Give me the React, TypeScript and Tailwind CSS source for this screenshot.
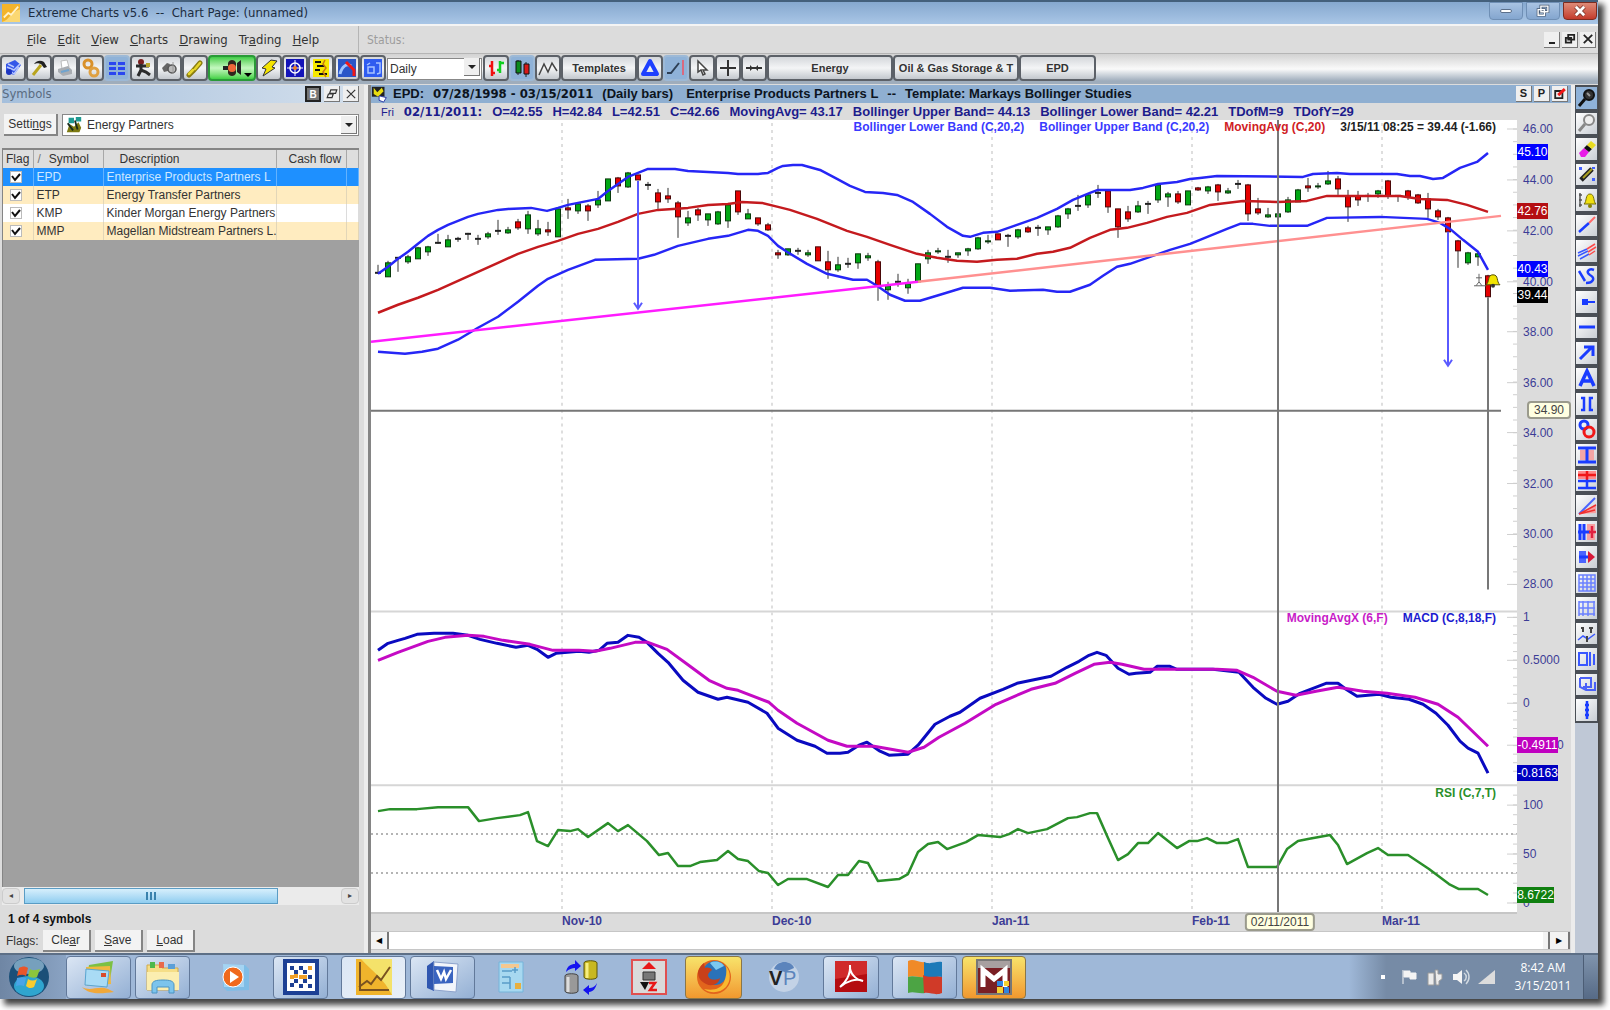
import { useState } from 'react'
import type { ReactNode } from 'react'
import clsx from 'clsx'

// price pane, x in plot units: bar k sits at 378 + 10k
// [body top, body bottom, high, low, g = up / r = down / k = unchanged]
type Candle = [number, number, number, number, 'g' | 'r' | 'k']

const candles: Candle[] = [
  [272, 273, 264, 273, 'k'], [262, 276, 260, 276, 'g'], [257, 258, 257, 271, 'k'], [256, 261, 254, 263, 'g'],
  [247, 258, 246, 258, 'g'], [246, 251, 245, 255, 'g'], [242, 243, 233, 243, 'k'], [239, 246, 234, 246, 'g'],
  [238, 239, 236, 241, 'k'], [233, 234, 232, 239, 'k'], [238, 239, 234, 244, 'k'], [233, 236, 231, 238, 'g'],
  [230, 231, 219, 234, 'k'], [229, 232, 226, 233, 'g'], [221, 227, 218, 229, 'r'], [214, 228, 210, 233, 'g'],
  [228, 233, 219, 235, 'g'], [229, 231, 221, 235, 'r'], [208, 236, 208, 236, 'g'], [207, 209, 198, 218, 'r'],
  [203, 210, 202, 213, 'g'], [205, 210, 203, 220, 'r'], [199, 204, 190, 207, 'g'], [178, 200, 178, 200, 'g'],
  [177, 185, 176, 192, 'r'], [172, 186, 171, 187, 'g'], [174, 179, 174, 179, 'r'], [184, 185, 181, 189, 'k'],
  [192, 201, 188, 208, 'r'], [195, 198, 187, 202, 'r'], [202, 216, 200, 237, 'r'], [217, 222, 210, 225, 'g'],
  [209, 214, 207, 220, 'r'], [213, 219, 213, 225, 'g'], [211, 223, 210, 224, 'g'], [204, 220, 202, 227, 'g'],
  [190, 211, 190, 214, 'r'], [213, 218, 208, 218, 'g'], [217, 223, 217, 225, 'r'], [224, 229, 222, 230, 'r'],
  [252, 254, 249, 258, 'r'], [248, 254, 248, 255, 'g'], [250, 251, 247, 254, 'k'], [252, 254, 249, 256, 'g'],
  [246, 260, 246, 260, 'r'], [261, 269, 250, 278, 'r'], [264, 269, 256, 271, 'g'], [263, 264, 257, 267, 'k'],
  [253, 262, 253, 268, 'g'], [255, 257, 252, 260, 'g'], [261, 285, 259, 300, 'r'], [285, 289, 281, 299, 'g'],
  [281, 283, 273, 286, 'k'], [283, 287, 278, 293, 'g'], [263, 281, 263, 282, 'g'], [252, 258, 249, 263, 'g'],
  [250, 251, 247, 253, 'g'], [256, 257, 249, 262, 'k'], [252, 254, 252, 257, 'g'], [248, 250, 247, 255, 'g'],
  [237, 248, 236, 249, 'g'], [240, 241, 234, 243, 'g'], [233, 239, 233, 239, 'r'], [235, 236, 233, 246, 'k'],
  [229, 236, 228, 238, 'g'], [227, 231, 225, 232, 'r'], [227, 228, 224, 235, 'k'], [226, 229, 226, 234, 'g'],
  [215, 226, 214, 227, 'g'], [208, 213, 207, 218, 'g'], [205, 206, 194, 210, 'k'], [194, 204, 193, 207, 'g'],
  [192, 193, 184, 197, 'k'], [190, 206, 190, 212, 'r'], [208, 226, 208, 237, 'r'], [211, 218, 205, 221, 'r'],
  [205, 211, 200, 212, 'g'], [203, 204, 200, 213, 'k'], [184, 199, 184, 202, 'g'], [193, 196, 191, 206, 'g'],
  [193, 201, 190, 203, 'r'], [190, 204, 190, 204, 'g'], [187, 189, 186, 190, 'r'], [186, 190, 185, 193, 'g'],
  [184, 191, 183, 200, 'r'], [190, 192, 187, 193, 'g'], [183, 184, 179, 188, 'k'], [184, 213, 183, 220, 'r'],
  [208, 212, 197, 214, 'r'], [214, 216, 207, 217, 'g'], [213, 216, 207, 217, 'g'], [199, 211, 196, 212, 'g'],
  [189, 201, 188, 201, 'g'], [185, 187, 177, 191, 'r'], [185, 186, 182, 188, 'g'], [180, 183, 170, 184, 'g'],
  [178, 188, 175, 194, 'r'], [195, 206, 189, 221, 'r'], [195, 199, 190, 205, 'r'], [195, 196, 192, 201, 'k'],
  [190, 193, 189, 197, 'g'], [180, 195, 179, 198, 'r'], [195, 196, 195, 201, 'k'], [190, 196, 189, 199, 'r'],
  [194, 202, 193, 203, 'r'], [198, 208, 192, 217, 'r'], [210, 216, 208, 219, 'r'], [217, 231, 216, 232, 'r'],
  [240, 250, 239, 267, 'r'], [252, 262, 251, 264, 'g'], [253, 256, 251, 265, 'g'], [275, 296, 274, 297, 'r'],
]

const upperBand =
  '378,273 388,266 398,258 408,251 418,243 428,235 438,229 448,224 458,220 468,216 478,213 488,211 498,209 508,208 531,207 547,210 558,207 568,204 578,202 588,200 598,198 608,190 618,183 628,176 638,172 648,168 675,168 688,170 728,172 738,173 758,173 768,172 778,167 783,165 793,164 802,164 820,169 837,178 850,185 865,191 883,192 897,194 913,201 930,213 947,226 963,235 970,236 983,232 997,231 1017,224 1037,217 1057,208 1073,199 1090,192 1098,189 1130,189 1143,187 1158,183 1177,181 1190,178 1200,177 1217,175 1303,176 1313,173 1337,172 1350,173 1397,173 1410,175 1420,175 1433,178 1443,177 1460,167 1477,161 1488,152'
const movingAvg =
  '378,312 398,304 418,297 438,289 458,280 478,271 498,262 518,253 538,246 558,240 578,233 598,228 618,221 638,213 658,209 688,207 708,204 728,203 742,201 762,202 778,206 790,209 817,218 847,230 867,236 890,244 917,253 937,257 957,260 977,261 997,259 1017,258 1037,253 1053,251 1070,247 1090,237 1110,229 1127,227 1147,222 1167,216 1187,212 1210,204 1243,200 1277,201 1307,200 1327,195 1400,195 1420,198 1447,199 1467,204 1488,211'
const lowerBand =
  '378,351 405,353 422,351 438,348 458,339 478,327 498,316 518,301 538,285 548,278 568,269 595,259 638,258 654,254 678,245 708,238 728,235 748,229 758,230 768,235 778,245 787,251 807,263 827,273 853,279 867,279 877,285 890,294 905,300 920,300 940,294 963,287 990,287 1010,290 1043,289 1057,291 1070,291 1090,284 1103,275 1117,266 1130,263 1150,256 1170,249 1190,243 1200,239 1227,228 1240,223 1253,223 1270,225 1307,225 1327,217 1380,216 1427,218 1440,222 1450,228 1463,239 1478,251 1488,269'
const macd =
  '378,650 388,643 398,640 405,638 417,634 434,633 453,633 468,635 480,639 497,643 516,647 528,645 537,649 548,657 556,653 579,651 589,652 599,650 607,643 618,642 628,635 639,637 647,642 658,653 668,662 683,680 698,692 718,699 727,697 748,702 767,713 778,728 797,740 815,746 827,753 840,753 848,752 859,745 867,742 880,751 889,755 908,754 918,745 935,724 950,716 960,712 980,698 1003,689 1017,683 1051,676 1067,667 1079,661 1089,655 1097,652 1106,655 1118,668 1129,674 1136,673 1150,672 1157,666 1170,666 1177,669 1213,669 1239,672 1253,687 1266,698 1277,704 1288,701 1300,693 1326,683 1338,683 1346,689 1357,696 1379,694 1391,697 1409,699 1423,704 1436,713 1448,725 1460,741 1468,748 1478,753 1488,773'
const macdSignal =
  '378,660 398,652 428,641 445,637 468,635 484,636 503,640 530,644 553,650 579,650 595,651 610,648 635,642 648,642 667,649 690,666 709,680 727,688 738,690 769,702 778,710 797,723 828,740 847,746 874,746 908,752 924,747 939,737 965,723 996,704 1031,689 1055,683 1075,673 1094,664 1110,662 1122,664 1144,669 1217,669 1237,670 1253,677 1277,691 1296,695 1316,691 1338,687 1363,691 1387,693 1415,697 1438,704 1458,717 1488,746'
const rsi =
  '378,811 390,809 417,809 438,807 468,807 479,821 497,818 520,815 528,812 537,841 548,846 558,830 570,831 578,829 588,837 608,823 618,831 628,825 647,841 659,855 668,853 678,866 690,866 700,862 717,860 728,851 738,859 748,861 759,871 768,873 778,885 788,879 807,879 828,887 838,875 848,875 859,861 868,863 878,881 899,879 908,874 918,852 928,844 938,842 947,849 966,842 978,835 1000,837 1009,834 1018,829 1028,833 1047,829 1068,818 1077,817 1090,813 1097,813 1108,838 1118,860 1128,854 1138,843 1148,843 1158,833 1177,848 1189,841 1197,841 1207,838 1217,843 1227,843 1238,839 1248,867 1277,867 1287,849 1298,841 1308,839 1330,835 1338,845 1347,864 1367,853 1378,848 1388,855 1408,855 1429,869 1449,884 1459,889 1478,889 1488,895'

const PLOT = { left: 371, top: 119, width: 1146, height: 793 }

const months = [
  { x: 562, label: 'Nov-10' },
  { x: 772, label: 'Dec-10' },
  { x: 992, label: 'Jan-11' },
  { x: 1192, label: 'Feb-11' },
  { x: 1382, label: 'Mar-11' },
]

const scale = [
  { y: 128, label: '46.00' },
  { y: 179, label: '44.00' },
  { y: 230, label: '42.00' },
  { y: 281, label: '40.00' },
  { y: 331, label: '38.00' },
  { y: 382, label: '36.00' },
  { y: 432, label: '34.00' },
  { y: 483, label: '32.00' },
  { y: 534, label: '30.00' },
  { y: 584, label: '28.00' },
  { y: 617, label: '1' },
  { y: 660, label: '0.5000' },
  { y: 703, label: '0' },
  { y: 745, label: '-0.5000' },
  { y: 805, label: '100' },
  { y: 854, label: '50' },
  { y: 903, label: '0' },
]

const tags = [
  { y: 151, label: '45.10', cls: 'bg-[#0000ff] w-[31px]' },
  { y: 210, label: '42.76', cls: 'bg-[#b40e12] w-[31px]' },
  { y: 268, label: '40.43', cls: 'bg-[#0000ff] w-[31px]' },
  { y: 294, label: '39.44', cls: 'bg-black w-[31px]' },
  { y: 745, label: '-0.4911', cls: 'bg-[#c000c0] w-[41px]' },
  { y: 773, label: '-0.8163', cls: 'bg-[#0000c0] w-[41px]' },
  { y: 895, label: '8.6722', cls: 'bg-[#108010] w-[37px]' },
]

const minorTicks = [
  ...Array.from({ length: 37 }, (_, i) => 128 + i * 12.67),
  ...Array.from({ length: 19 }, (_, i) => 617 + i * 8.56),
  ...Array.from({ length: 12 }, (_, i) => 795 + i * 9.8),
]

const symbols = [
  { id: 'EPD', name: 'Enterprise Products Partners L' },
  { id: 'ETP', name: 'Energy Transfer Partners' },
  { id: 'KMP', name: 'Kinder Morgan Energy Partners' },
  { id: 'MMP', name: 'Magellan Midstream Partners L.' },
]

const readings = [
  'O=42.55', 'H=42.84', 'L=42.51', 'C=42.66', 'MovingAvg= 43.17',
  'Bollinger Upper Band= 44.13', 'Bollinger Lower Band= 42.21', 'TDofM=9', 'TDofY=29',
]

function pctY(y: number) {
  return `${((y - PLOT.top) / PLOT.height) * 100}%`
}

function pctX(x: number) {
  return `${((x - PLOT.left) / PLOT.width) * 100}%`
}

function Svg({ children, size = 'size-5', box = '0 0 20 20' }: { children: ReactNode; size?: string; box?: string }) {
  return (
    <svg viewBox={box} className={clsx('shrink-0', size)} fill="none" aria-hidden="true">
      {children}
    </svg>
  )
}

const leftTools: { name: string; pressed?: boolean; icon: ReactNode }[] = [
  {
    name: 'Pages',
    icon: <><path d="M3 6l9-4 6 5-7 10-8-3z" fill="#3557e8" /><path d="M4 9l7 3 6-6M6 12l5 4 5-7M5 6l6 3" stroke="#b9c8ff" strokeWidth="1.5" /><circle cx="6" cy="14" r="3" fill="#1d35c0" /></>,
  },
  { name: 'Build', icon: <><path d="M4 17L12 7" stroke="#b9a51f" strokeWidth="3" /><path d="M5 6c3-4 7-4 10-2l3 5-3 1-3-4c-3-1-4-1-7 0z" fill="#222" /></> },
  { name: 'Print', icon: <><path d="M6 3l6-1 2 7-7 2z" fill="#fff" stroke="#bbb" /><path d="M3 11l10-3 4 4v4l-9 2-5-4z" fill="#a9adb2" /><path d="M6 14l8-2" stroke="#6fa4cf" strokeWidth="2" /></> },
  { name: 'Preferences', icon: <><circle cx="7" cy="6" r="4" stroke="#d9912a" strokeWidth="3" /><circle cx="13" cy="14" r="4" stroke="#e0a040" strokeWidth="3" /></> },
  { name: 'Symbol list', pressed: true, icon: <path d="M2 4h7v3H2zM11 4h7v3h-7zM2 9h7v3H2zM11 9h7v3h-7zM2 14h7v3H2zM11 14h7v3h-7z" fill="#2a46f0" /> },
  { name: 'Scanner', icon: <><circle cx="8" cy="4" r="3" fill="#7a1f1f" /><path d="M3 8h13M8 6v6M5 18l3-6 5 2 4 3" stroke="#2b2b2b" strokeWidth="3" /><path d="M13 5h4v4h-4z" fill="#b7a52a" /></> },
  { name: 'Sound', icon: <><path d="M3 10l5-5 3 1-2 7-4 1z" fill="#666" /><circle cx="13" cy="11" r="4" fill="#bbb" stroke="#555" strokeWidth="1.5" /><path d="M14 4v12" stroke="#999" /></> },
  { name: 'Link', icon: <><path d="M4 17l5-5M8 13l7-8" stroke="#8a7d10" strokeWidth="5" strokeLinecap="round" /><path d="M4 16l4-4M10 11l5-6" stroke="#e6d52c" strokeWidth="2.5" strokeLinecap="round" /></> },
]

const midTools: { name: string; icon: ReactNode }[] = [
  { name: 'Quick quote', icon: <path d="M12 2l6 1-5 6 3 1L4 18l3-7-4-1z" fill="#f5e400" stroke="#333" /> },
  { name: 'Target', icon: <><path d="M1 1h18v18H1z" fill="#1414b8" /><circle cx="10" cy="10" r="5" stroke="#fff" strokeWidth="1.5" /><path d="M10 2v16M2 10h16" stroke="#fff" /><circle cx="10" cy="10" r="2" fill="#f08020" /></> },
  { name: 'Heat map', icon: <><path d="M2 1h16v18H2z" fill="#f6e800" /><path d="M4 4h6M6 8h8M4 12h5M8 16h8" stroke="#111" strokeWidth="2" /><path d="M14 2l-2 4 3 4-3 4 3 5" stroke="#c87a10" strokeWidth="1.5" /></> },
  { name: 'Gauge', icon: <><path d="M1 1h18v18H1z" fill="#2a55c8" /><path d="M3 16c2-8 7-11 11-8" stroke="#9fc3ff" strokeWidth="3" /><path d="M9 4l8 8v6" stroke="#f01818" strokeWidth="3" /></> },
  { name: 'Replay', icon: <><path d="M1 1h18v18H1z" fill="#2f5cf0" /><path d="M4 7l3-2M13 5h4v10l-3 1M5 9h6v6H5z" stroke="#a9c4ff" strokeWidth="1.5" /></> },
]

const drawTools: { name: string; icon: ReactNode; pressed?: boolean }[] = [
  { name: 'Zoom in', pressed: true, icon: <><circle cx="12" cy="7" r="5" fill="#333" stroke="#111" strokeWidth="2" /><path d="M8 11l-6 7" stroke="#111" strokeWidth="3" /><path d="M10 5l3 3" stroke="#999" strokeWidth="2" /></> },
  { name: 'Zoom out', icon: <><circle cx="12" cy="7" r="5" fill="#eee" stroke="#888" strokeWidth="2" /><path d="M8 11l-6 7" stroke="#888" strokeWidth="3" /></> },
  { name: 'Eraser', icon: <><path d="M2 14l5-5 5 4-4 5H4z" fill="#e81ce8" /><path d="M7 9l3-3 5 4-3 3z" fill="#111" /><path d="M10 6l4-4 5 4-4 4z" fill="#e8dc20" /></> },
  { name: 'Pencil', icon: <><path d="M2 3h3v3H2zM15 14h3v3h-3zM15 3h3v2h-3zM9 8h3v2z" fill="#4060ff" /><path d="M4 16l11-11" stroke="#222" strokeWidth="5" /><path d="M6 14l9-9" stroke="#a99f20" strokeWidth="2" /></> },
  { name: 'Alert', icon: <><path d="M3 3v14M2 5h3M2 10h3M2 15h3" stroke="#555" strokeWidth="1.5" /><path d="M7 14c3-2 1-10 6-10s3 8 6 10z" fill="#f0e010" stroke="#77700a" /><circle cx="13" cy="16" r="2" fill="#888200" /></> },
  { name: 'Trend line', icon: <><path d="M2 17L12 8" stroke="#1a3cff" strokeWidth="2.5" /><path d="M12 8l6-6" stroke="#ff6b6b" strokeWidth="2" /></> },
  { name: 'Channel', icon: <><path d="M1 12l9-4M1 15l10-5M3 18l9-5" stroke="#3a58ff" strokeWidth="1.5" /><path d="M10 8l8-5M11 11l8-5M12 14l6-4" stroke="#ff4a4a" strokeWidth="1.5" /></> },
  { name: 'Curve', icon: <path d="M2 5l6 10M17 4c-5-2-9 2-4 5 6 3 3 8-4 8" stroke="#1a3cff" strokeWidth="2.5" /> },
  { name: 'Ray', icon: <path d="M6 8h4v4H6zM10 10h8" stroke="#1a3cff" strokeWidth="2" fill="#1a3cff" /> },
  { name: 'Horizontal line', icon: <path d="M2 10h16" stroke="#1a3cff" strokeWidth="3" /> },
  { name: 'Arrow', icon: <path d="M3 16L15 4M7 4h9v9" stroke="#1a3cff" strokeWidth="3" /> },
  { name: 'Text', icon: <path d="M3 18L10 3l7 15M5 13h10" stroke="#1a3cff" strokeWidth="3.5" /> },
  { name: 'Cycle', icon: <path d="M4 4h3v12H4M16 4h-3v12h3" stroke="#1a3cff" strokeWidth="2.5" /> },
  { name: 'Shapes', icon: <><circle cx="7" cy="6" r="4" stroke="#1a3cff" strokeWidth="3" /><circle cx="12" cy="13" r="5" stroke="#f01818" strokeWidth="3" /></> },
  { name: 'Range', icon: <><path d="M3 5h14v10H3z" fill="#f4a5a5" /><path d="M1 3h18M1 17h18M10 3v14" stroke="#1a3cff" strokeWidth="3" /></> },
  { name: 'Extension', icon: <><path d="M1 1h18v8H1z" fill="#ff8a8a" /><path d="M1 5h18M10 1v9" stroke="#f01818" strokeWidth="2.5" /><path d="M1 11h18M1 18h18M10 11v7" stroke="#1a3cff" strokeWidth="2.5" /></> },
  { name: 'Speed lines', icon: <><path d="M2 18L18 2" stroke="#4a64ff" strokeWidth="2" /><path d="M2 18L19 8v9z" fill="#f7a0a0" /><path d="M2 18L19 9M2 18l16-4" stroke="#f03030" strokeWidth="1.5" /></> },
  { name: 'Time zones', icon: <><path d="M10 2h8v16h-8z" fill="#f7a0a0" /><path d="M3 2v16M7 2v16M1 10h12" stroke="#1a3cff" strokeWidth="3" /><path d="M12 10h7M15 4v12" stroke="#e02040" strokeWidth="2.5" /></> },
  { name: 'Projection', icon: <><path d="M2 4h7v12H2z" fill="#4a64ff" /><path d="M2 10h11" stroke="#1a3cff" strokeWidth="3" /><path d="M11 4l7 6-7 6z" fill="#d81838" /></> },
  { name: 'Grid', icon: <path d="M2 2h16v16H2zM6 2v16M10 2v16M14 2v16M2 6h16M2 10h16M2 14h16" stroke="#6a80ff" strokeWidth="1.5" /> },
  { name: 'Bars', icon: <path d="M2 3v15M6 3v15M11 3v15M17 3v15M2 4h16M2 10h16M2 16h16" stroke="#6a80ff" strokeWidth="1.5" /> },
  { name: 'Waves', icon: <><path d="M1 16l5-4 5 3 7-5" stroke="#3a58ff" strokeWidth="1.5" /><path d="M6 3v5M4 4h3M14 3v6M12 4h4M10 12v6" stroke="#444" strokeWidth="2" /></> },
  { name: 'Box', icon: <path d="M2 4h8v12H2zM13 3v14M17 5v11" stroke="#3a58ff" strokeWidth="2" /> },
  { name: 'Spiral', icon: <path d="M3 3h11v9H6M3 3v9l6 3h9V7M9 8v6" stroke="#4a60f8" strokeWidth="2" /> },
  { name: 'Vertical line', icon: <path d="M10 1v18M8 5h4M8 10h4M8 15h4" stroke="#1a3cff" strokeWidth="2.5" /> },
]

const toolSkins = {
  plain: 'border-[#5c6168] bg-linear-to-b from-[#d4d7db] via-[#f4f5f6] to-[#c3c8ce]',
  pressed: 'border-[#9db9d6] bg-[#8fb2d8]',
  live: 'border-[#2a9a38] bg-linear-to-b from-[#3ccc44] via-[#c4f8c0] to-[#3fd144]',
}

function ToolButton({ name, skin = 'plain', className, children }: { name: string; skin?: keyof typeof toolSkins; className?: string; children: ReactNode }) {
  return (
    <button
      aria-label={name}
      className={clsx('flex h-[26px] items-center justify-center rounded border-2 text-[11px] font-bold text-[#333]', toolSkins[skin], className)}
    >
      {children}
    </button>
  )
}

function MiniButton({ name, children }: { name: string; children: ReactNode }) {
  return (
    <button aria-label={name} className="flex size-4 items-center justify-center border-r border-b border-[#777] bg-[#efefef] text-[11px] font-bold leading-none text-[#222]">
      {children}
    </button>
  )
}

function MenuItem({ label, hot = 0 }: { label: string; hot?: number }) {
  return (
    <button>
      {label.slice(0, hot)}
      <span className="underline">{label[hot]}</span>
      {label.slice(hot + 1)}
    </button>
  )
}

function PushButton({ children, className }: { children: ReactNode; className?: string }) {
  return (
    <button className={clsx('h-[22px] border-r-2 border-b-2 border-[#858585] bg-[#f3f3f3] text-[12px] text-[#333]', className)}>
      {children}
    </button>
  )
}

function TitleBar() {
  return (
    <header className="flex h-6 items-center border-t-2 border-[#44607c] bg-linear-to-b from-[#86a8cf] to-[#a9c6e6] pl-[2px] text-[13px] text-[#1c2c40]">
      <Svg size="size-[18px]">
        <path d="M0 0h20v20H0z" fill="#f3b42a" />
        <path d="M0 20C8 18 10 8 20 6v14z" fill="#fbd873" />
        <path d="M2 15l5-5 3 2 8-9" stroke="#fff2c8" strokeWidth="2" />
      </Svg>
      <h1 className="ml-2 grow whitespace-pre font-['DejaVu_Sans_Condensed','Noto_Sans',sans-serif]">Extreme Charts v5.6  --  Chart Page: (unnamed)</h1>
      <div className="flex gap-[3px] self-start pr-px">
        <button aria-label="Minimize" className="flex h-[18px] w-[34px] items-center justify-center rounded-b border border-[#6f8fb5] bg-linear-to-b from-[#a9c3e2] to-[#84a6cf]">
          <span className="h-1 w-3 rounded-sm border border-[#5b6f8a] bg-white" />
        </button>
        <button aria-label="Restore" className="flex h-[18px] w-[34px] items-center justify-center rounded-b border border-[#6f8fb5] bg-linear-to-b from-[#a9c3e2] to-[#84a6cf]">
          <Svg size="size-[14px]">
            <path d="M7 3h10v8H7zM3 8h9v8H3z" fill="#a9c3e2" stroke="#44566e" strokeWidth="4" />
            <path d="M7 3h10v8H7zM3 8h9v8H3z" stroke="#fff" strokeWidth="2" />
          </Svg>
        </button>
        <button aria-label="Close" className="flex h-[18px] w-[34px] items-center justify-center rounded-b border border-[#7c2c20] bg-linear-to-b from-[#dd8a78] to-[#c3392a]">
          <Svg size="size-[14px]">
            <path d="M4 4l12 12M16 4L4 16" stroke="#6a2a20" strokeWidth="6" />
            <path d="M4 4l12 12M16 4L4 16" stroke="#fff" strokeWidth="4" />
          </Svg>
        </button>
      </div>
    </header>
  )
}

function MenuBar() {
  return (
    <nav className="flex h-[29px] items-center border-t-2 border-[#f4f4f4] bg-[#dcdcdc] pr-[2px] pl-[27px] font-['DejaVu_Sans_Condensed','Noto_Sans',sans-serif] text-[13px] text-[#333]">
      <div className="flex w-[331px] gap-[11px]">
        <MenuItem label="File" />
        <MenuItem label="Edit" />
        <MenuItem label="View" />
        <MenuItem label="Charts" />
        <MenuItem label="Drawing" />
        <MenuItem label="Trading" hot={2} />
        <MenuItem label="Help" />
      </div>
      <span className="grow border-l border-[#b5b5b5] py-1 pl-2 text-[12px] leading-5 text-[#9d9d9d]">Status:</span>
      <div className="flex gap-[2px]">
        <MiniButton name="Minimize page"><span className="mt-2 h-[2px] w-[6px] bg-[#222]" /></MiniButton>
        <MiniButton name="Restore page">
          <Svg size="size-3"><path d="M7 3h10v8H7zM3 8h9v8H3z" stroke="#222" strokeWidth="3" /></Svg>
        </MiniButton>
        <MiniButton name="Close page">
          <Svg size="size-3"><path d="M3 3l14 14M17 3L3 17" stroke="#222" strokeWidth="3" /></Svg>
        </MiniButton>
      </div>
    </nav>
  )
}

function Toolbar() {
  return (
    <div className="flex h-[31px] items-center border-t border-[#b5b5b5] bg-linear-to-b from-[#d2d2d2] via-[#fafafa] to-[#9fadbc] to-90% pb-[2px]">
      {leftTools.map(t => (
        <ToolButton key={t.name} name={t.name} skin={t.pressed ? 'pressed' : 'plain'} className="w-[26px]">
          <Svg>{t.icon}</Svg>
        </ToolButton>
      ))}
      <ToolButton name="Auto update" skin="live" className="relative w-[48px]">
        <Svg>
          <path d="M6 5c1-4 7-4 8 0v10c-1 4-7 4-8 0z" fill="#30251d" />
          <circle cx="10" cy="10" r="4" fill="#f0683a" />
          <path d="M1 8h5v4H1zM15 5l4-3v15l-4-3" fill="#222" />
        </Svg>
        <span className="absolute right-0.5 bottom-0.5 border-x-4 border-t-4 border-x-transparent border-t-black" />
      </ToolButton>
      {midTools.map(t => (
        <ToolButton key={t.name} name={t.name} className="w-[26px]">
          <Svg>{t.icon}</Svg>
        </ToolButton>
      ))}
      <div className="relative mx-px w-[95px]">
        <select aria-label="Bar period" className="h-[22px] w-full appearance-none border border-[#888] bg-white pl-[2px] text-[12px] text-[#333]">
          <option>Daily</option>
        </select>
        <ComboArrow />
      </div>
      <ToolButton name="Bar chart" className="w-[26px]">
        <Svg>
          <path d="M3 8h3M6 3v15M6 15h3" stroke="#f01010" strokeWidth="2.5" />
          <path d="M11 12h3M14 3v12M14 5h4" stroke="#10d020" strokeWidth="2.5" />
        </Svg>
      </ToolButton>
      <ToolButton name="Candle chart" skin="pressed" className="w-[26px]">
        <Svg>
          <path d="M6 2v15M14 4v15" stroke="#222" />
          <path d="M4 3h5v12H4z" fill="#0c8a1c" stroke="#111" />
          <path d="M12 6h5v10h-5z" fill="#d81818" stroke="#111" />
        </Svg>
      </ToolButton>
      <ToolButton name="Line chart" className="w-[26px]">
        <Svg><path d="M1 17L6 6l4 8 4-9 5 8" stroke="#444" strokeWidth="1.5" /></Svg>
      </ToolButton>
      <ToolButton name="Templates" className="w-[76px]">Templates</ToolButton>
      <ToolButton name="Triangle" className="w-[26px]">
        <Svg><path d="M10 3l7 13H3z" stroke="#1e40ff" strokeWidth="4" strokeLinejoin="round" /></Svg>
      </ToolButton>
      <ToolButton name="Snap line" skin="pressed" className="w-[26px]">
        <Svg><path d="M1 15h4L13 5" stroke="#2d3f55" strokeWidth="2" /><path d="M17 2v15" stroke="#d86a80" strokeWidth="2" /></Svg>
      </ToolButton>
      <ToolButton name="Pointer" className="w-[26px]">
        <Svg><path d="M6 3v11l3-2 2 5 2-1-2-4h4z" fill="#fff" stroke="#444" strokeWidth="1.5" /></Svg>
      </ToolButton>
      <ToolButton name="Crosshair" className="w-[26px]">
        <Svg><path d="M10 2v16M2 10h16" stroke="#333" strokeWidth="2" /></Svg>
      </ToolButton>
      <ToolButton name="Tracker" className="w-[26px]">
        <Svg><path d="M2 10h16" stroke="#333" strokeWidth="2" /><path d="M6 7l3 3-3 3zM14 7l-3 3 3 3z" fill="#333" /></Svg>
      </ToolButton>
      <ToolButton name="Energy" className="w-[126px]">Energy</ToolButton>
      <ToolButton name="Oil & Gas Storage & T" className="w-[126px] whitespace-nowrap">Oil &amp; Gas Storage &amp; T</ToolButton>
      <ToolButton name="EPD" className="w-[77px]">EPD</ToolButton>
    </div>
  )
}

function ComboArrow() {
  return (
    <span className="pointer-events-none absolute top-[2px] right-[2px] flex h-[18px] w-4 items-center justify-center border-r border-b border-[#777] bg-[#efefef]">
      <span className="border-x-4 border-t-4 border-x-transparent border-t-[#222]" />
    </span>
  )
}

function SymbolsPanel() {
  const [selected, setSelected] = useState('EPD')

  return (
    <aside className="flex w-[364px] shrink-0 flex-col bg-[#dcdcdc] pr-[5px] pl-[2px] text-[12px] text-[#333]">
      <div className="flex h-[18px] items-center bg-linear-to-r from-[#a5bfdc] to-[#d3dfec]">
        <h2 className="grow font-['DejaVu_Sans_Condensed','Noto_Sans',sans-serif] text-[13px] leading-4 text-[#5a6b80]">Symbols</h2>
        <div className="flex gap-[3px]">
          <button aria-label="Sort" className="flex size-4 items-center justify-center border-2 border-[#222] bg-[#777] text-[10px] font-bold text-white">B</button>
          <MiniButton name="Float panel">
            <Svg size="size-3"><path d="M8 3h10l-2 6H6zM4 10h8l-2 6H2z" stroke="#333" strokeWidth="2" /></Svg>
          </MiniButton>
          <MiniButton name="Close panel">
            <Svg size="size-3"><path d="M3 3l14 14M17 3L3 17" stroke="#333" strokeWidth="2" /></Svg>
          </MiniButton>
        </div>
      </div>

      <div className="flex gap-1 py-[11px] pl-[2px]">
        <PushButton className="w-[54px]">Setti<span className="underline">ng</span>s</PushButton>
        <div className="relative grow">
          <select aria-label="Symbol group" className="h-[22px] w-full appearance-none border border-[#888] bg-white pl-6 text-[12px] text-[#333]">
            <option>Energy Partners</option>
          </select>
          <span className="pointer-events-none absolute top-[2px] left-[3px]">
            <Svg size="size-[18px]">
              <path d="M2 18l3-9 5 3 5-5 3 6-2 5z" fill="#7d7a12" />
              <path d="M4 2h6v6H4zM12 1h6v5h-6z" fill="#1f9a92" />
              <path d="M3 8l6 8M11 5l3 10" stroke="#1a2a1a" strokeWidth="2" />
            </Svg>
          </span>
          <ComboArrow />
        </div>
      </div>

      <div className="mt-px flex min-h-0 grow flex-col border-t-2 border-l border-[#858585] bg-[#a0a0a0]">
        <table className="w-full table-fixed border-collapse text-left">
          <colgroup>
            <col className="w-[30px]" />
            <col className="w-[70px]" />
            <col className="w-[173px]" />
            <col className="w-[70px]" />
            <col />
          </colgroup>
          <thead>
            <tr className="h-[18px] bg-[#dedede] [&>th]:border-r [&>th]:border-[#a8a8a8] [&>th]:py-0 [&>th]:font-normal [&>th]:leading-4">
              <th className="pl-[3px]">Flag</th>
              <th className="pl-1"><span className="mr-2 text-[#777]">/</span>Symbol</th>
              <th className="pl-4">Description</th>
              <th className="pl-3 whitespace-nowrap">Cash flow</th>
              <th aria-label="More" />
            </tr>
          </thead>
          <tbody>
            {symbols.map((s, i) => (
              <tr
                key={s.id}
                onClick={() => setSelected(s.id)}
                className={clsx(
                  'h-[18px] [&>td]:border-r [&>td]:py-0 [&>td]:leading-4 [&>td]:whitespace-nowrap',
                  selected === s.id ? 'bg-[#1e90ff] text-[#cfe8ff] [&>td]:border-[#63b2ff]' : i % 2 ? 'bg-[#ffecc0] [&>td]:border-[#e2d6b8]' : 'bg-white [&>td]:border-[#dcdcdc]',
                )}
              >
                <td>
                  <span className="relative ml-[7px] block size-3">
                    <input type="checkbox" defaultChecked aria-label={`Flag ${s.id}`} className="peer absolute inset-0 size-3 appearance-none border border-[#bbb] bg-white" />
                    <svg viewBox="0 0 12 12" className="pointer-events-none invisible absolute inset-0 size-3 peer-checked:visible" fill="none">
                      <path d="M2 5l3 4 5-6" stroke="#111" strokeWidth="2" />
                    </svg>
                  </span>
                </td>
                <td className="pl-[3px]">{s.id}</td>
                <td className="pl-[3px]">{s.name}</td>
                <td />
                <td />
              </tr>
            ))}
          </tbody>
        </table>
      </div>

      <div className="flex h-[18px] items-center bg-[#ebebeb] text-[8px] text-[#444]">
        <button aria-label="Scroll left" className="h-4 w-[18px] rounded-sm border border-[#ccc] bg-[#e2e2e2]">◂</button>
        <div className="grow px-1">
          <div className="flex h-4 w-[81%] items-center justify-center gap-[2px] border border-[#5a9cc4] bg-linear-to-b from-[#d6effc] to-[#8fcdf0]">
            <i className="h-2 w-[2px] bg-[#3a82ad]" />
            <i className="h-2 w-[2px] bg-[#3a82ad]" />
            <i className="h-2 w-[2px] bg-[#3a82ad]" />
          </div>
        </div>
        <button aria-label="Scroll right" className="h-4 w-[18px] rounded-sm border border-[#ccc] bg-[#e2e2e2]">▸</button>
      </div>

      <p className="mt-1 pl-[6px] leading-5 font-bold text-[#111]">1 of 4 symbols</p>
      <div className="flex h-6 items-center gap-1 pl-1">
        <span>Flags:</span>
        <PushButton className="w-12">Cle<span className="underline">a</span>r</PushButton>
        <PushButton className="w-12"><span className="underline">S</span>ave</PushButton>
        <PushButton className="w-12"><span className="underline">L</span>oad</PushButton>
      </div>
    </aside>
  )
}

function Plot() {
  return (
    <svg viewBox={`${PLOT.left} ${PLOT.top} ${PLOT.width} ${PLOT.height}`} preserveAspectRatio="none" className="absolute inset-0 size-full" fill="none">
      {months.map(m => (
        <path key={m.label} d={`M${m.x} 122V912`} stroke="#dedede" strokeWidth="2" strokeDasharray="3 4" />
      ))}
      <path d="M371 611H1517M371 785H1517" stroke="#d6d6d6" strokeWidth="2" />
      <path d="M371 834H1517M371 873H1517" stroke="#b4b4b4" strokeWidth="2" strokeDasharray="2 3" />
      {scale.map(s => <path key={s.y} d={`M1507 ${s.y}H1517`} stroke="#cfcfcf" />)}
      {minorTicks.map(y => <path key={y} d={`M1513 ${y}H1517`} stroke="#cfcfcf" />)}

      {candles.map(([top, bottom, high, low, kind], k) => {
        const x = 378 + k * 10
        return (
          <g key={k}>
            <path d={`M${x} ${high}V${low}`} stroke="#333" />
            {kind === 'k' ? (
              <path d={`M${x - 3} ${top}h6`} stroke="#222" strokeWidth="2" />
            ) : (
              <rect x={x - 2.5} y={top} width="5" height={bottom - top} fill={kind === 'g' ? '#00a814' : '#e60000'} stroke={kind === 'g' ? '#0a3a0c' : '#4a0808'} />
            )}
          </g>
        )
      })}

      <g strokeWidth="2.5" strokeLinejoin="round">
        <polyline points={upperBand} stroke="#2626f6" />
        <polyline points={lowerBand} stroke="#2626f6" />
        <polyline points={movingAvg} stroke="#c41a1e" />
        <path d="M371 341L918 281" stroke="#ff1cff" />
        <path d="M918 281L1501 215" stroke="#ff9090" />
      </g>
      <g stroke="#5a5aff" strokeWidth="2">
        <path d="M638 180V307M634 302l4 6 4-6" />
        <path d="M1448 231V364M1444 359l4 6 4-6" />
      </g>
      <g strokeWidth="3" strokeLinejoin="round">
        <polyline points={macd} stroke="#0a0ac0" />
        <polyline points={macdSignal} stroke="#c40ac4" />
      </g>
      <polyline points={rsi} stroke="#2a8f2a" strokeWidth="2.5" strokeLinejoin="round" />

      {/* crosshair */}
      <path d="M371 410H1501M1278 119V912M1488 297V589" stroke="#777" strokeWidth="2" />

      {/* price alert */}
      <path d="M1479 273v8M1476 277h6M1476 285l3-4 3 4M1474 285h12" stroke="#666" />
      <path d="M1486 284c4-3 1-10 7-10s3 7 7 10z" fill="#f2e400" stroke="#55500a" />
      <circle cx="1493" cy="285" r="2" fill="#333" />
    </svg>
  )
}

function ChartWindow() {
  return (
    <main className="flex min-w-0 grow flex-col border-l-[3px] border-[#858585] bg-[#dcdcdc]">
      <div className="flex h-[18px] items-center bg-[#8fafd1] pr-[3px] text-[13px] font-bold text-[#0c1420]">
        <Svg size="size-[18px]">
          <path d="M1 2h14v11H1z" fill="#222" />
          <path d="M3 3l4 5 5-5 2 4-6 6-5-3z" fill="#e8dc10" />
          <path d="M9 12l8 2-3 5-5-2z" fill="#fff" stroke="#2030a0" />
        </Svg>
        <h2 className="ml-1 flex grow items-center gap-[9px] leading-4 whitespace-nowrap">
          <span>EPD:</span>
          <span className="font-['DejaVu_Sans_Condensed','Noto_Sans',sans-serif]">07/28/1998 - 03/15/2011</span>
          <span>(Daily bars)</span>
          <span className="ml-1">Enterprise Products Partners L</span>
          <span>--</span>
          <span>Template: Markays Bollinger Studies</span>
        </h2>
        <div className="flex gap-[2px]">
          <MiniButton name="Scale">S</MiniButton>
          <MiniButton name="Page">P</MiniButton>
          <MiniButton name="Edit chart">
            <Svg size="size-3"><path d="M2 5h12v12H2z" stroke="#222" strokeWidth="3" /><path d="M7 12l11-10" stroke="#f01818" strokeWidth="5" /></Svg>
          </MiniButton>
        </div>
      </div>
      <div className="flex h-[17px] items-center gap-[10px] overflow-hidden pl-[10px] text-[13px] leading-4 font-bold whitespace-nowrap text-[#1c1c8c]">
        <span className="text-[11px] font-normal">Fri</span>
        <span className="font-['DejaVu_Sans_Condensed','Noto_Sans',sans-serif]">02/11/2011:</span>
        {readings.map(r => <span key={r}>{r}</span>)}
      </div>

      <div className="flex min-h-0 grow">
        <div className="relative grow overflow-hidden bg-white text-[12px] font-bold whitespace-nowrap">
          <Plot />
          <div className="absolute top-0 right-[21px] flex gap-[15px] leading-[14px]">
            <span className="text-[#3a3aff]">Bollinger Lower Band (C,20,2)</span>
            <span className="text-[#3a3aff]">Bollinger Upper Band (C,20,2)</span>
            <span className="text-[#d02024]">MovingAvg (C,20)</span>
            <span className="text-[#222]">3/15/11 08:25 = 39.44 (-1.66)</span>
          </div>
          <div className="absolute right-[21px] flex -translate-y-1/2 gap-[15px] leading-4" style={{ top: pctY(618) }}>
            <span className="text-[#c81cc8]">MovingAvgX (6,F)</span>
            <span className="text-[#1c1cd0]">MACD (C,8,18,F)</span>
          </div>
          <span className="absolute right-[21px] -translate-y-1/2 leading-4 text-[#2a8f2a]" style={{ top: pctY(793) }}>RSI (C,7,T)</span>
        </div>
        <div className="relative w-[54px] shrink-0 text-[12px] leading-4 text-[#3c3c96]">
          {scale.map(s => (
            <span key={s.y} className="absolute left-[6px] -translate-y-1/2" style={{ top: pctY(s.y) }}>{s.label}</span>
          ))}
          {tags.map(t => (
            <span key={t.y} className={clsx('absolute left-0 flex h-4 -translate-y-1/2 items-center justify-center overflow-hidden text-white', t.cls)} style={{ top: pctY(t.y) }}>
              {t.label}
            </span>
          ))}
          <span className="absolute right-0 w-11 -translate-y-1/2 rounded-sm border-2 border-[#9a9a8c] bg-[#ffffe1] text-center leading-[14px] text-[#444]" style={{ top: pctY(409) }}>34.90</span>
        </div>
      </div>

      <div className="relative mr-[54px] h-[19px] border-t-2 border-[#c6c6c6] text-[12px] leading-[14px] font-bold text-[#3c3c96]">
        {months.map(m => (
          <span key={m.label} className="absolute top-0" style={{ left: pctX(m.x) }}>{m.label}</span>
        ))}
        <span className="absolute -top-px -translate-x-1/2 rounded-sm border-2 border-[#9a9a8c] bg-[#ffffe1] px-1 font-normal text-[#444]" style={{ left: pctX(1280) }}>02/11/2011</span>
      </div>
      <div className="mr-px mb-[3px] flex h-[19px] items-stretch border-y border-[#c6c6c6] bg-white text-[8px] text-black">
        <button aria-label="Earlier bars" className="w-[18px] border-r-2 border-[#777] bg-[#f3f3f3]">◀</button>
        <div className="grow" />
        <div className="w-[7px] border-r-2 border-[#777] bg-[#f3f3f3]" />
        <button aria-label="Later bars" className="w-5 border-r-2 border-[#777] bg-[#f3f3f3]">▶</button>
      </div>
    </main>
  )
}

function DrawingBar() {
  return (
    <div className="w-[27px] shrink-0 border-l-4 border-[#ececec] bg-[#bfc8d6]">
      <div className="flex h-[638px] flex-col">
        {drawTools.map(t => (
          <button
            key={t.name}
            aria-label={t.name}
            className={clsx('flex min-h-0 grow basis-0 items-center justify-center border-x border-y-2 border-[#4a4f56]', t.pressed ? 'bg-[#8fb2d8]' : 'bg-linear-to-br from-white to-[#c9ced4]')}
          >
            <Svg>{t.icon}</Svg>
          </button>
        ))}
      </div>
    </div>
  )
}

function Task({ name, className, open, hot, children }: { name: string; className?: string; open?: boolean; hot?: boolean; children: ReactNode }) {
  return (
    <button
      aria-label={name}
      className={clsx(
        'flex h-[43px] shrink-0 items-center justify-center',
        open && 'rounded-sm border border-[#62799a] bg-linear-to-br from-[#dbe6f4] to-[#94b0d4]',
        hot && 'rounded-sm border border-[#8a7648] bg-linear-to-b from-[#f7e36a] to-[#f0982e]',
        className,
      )}
    >
      <Svg size="size-9" box="0 0 36 36">{children}</Svg>
    </button>
  )
}

function Taskbar() {
  return (
    <footer className="flex h-[46px] items-center border-t-2 border-[#5d6f86] bg-[#9fb8d8]">
      <button aria-label="Start" className="flex h-full w-[66px] items-center bg-linear-to-r from-[#6f86a4] to-[#8aa3c3] pl-2">
        <Svg size="size-[42px]" box="0 0 42 42">
          <circle cx="21" cy="21" r="20" fill="#1b4f78" />
          <ellipse cx="21" cy="30" rx="15" ry="10" fill="#2fa5cf" />
          <ellipse cx="21" cy="10" rx="15" ry="8" fill="#9dc3da" opacity=".7" />
          <path d="M11 12c4-2 6-2 9 0l-2 8c-3-2-6-1-9 0z" fill="#e8562a" />
          <path d="M22 13c3 2 6 1 10 0l-3 8c-3 1-6 1-9-1z" fill="#8cc63c" />
          <path d="M9 22c3-1 6-1 9 0l-2 8c-3-1-5-1-8 0z" fill="#4aa4e8" />
          <path d="M20 23c3 2 6 2 9 0l-3 8c-3 2-6 1-8-1z" fill="#f8cc30" />
        </Svg>
      </button>
      <Task name="Mail" open className="w-[65px]">
        <path d="M8 6l24-4-3 19-24 4z" fill="#7cc043" /><path d="M5 8l24-1 1 18-24 2z" fill="#f0b840" />
        <path d="M5 10l23 2-2 16-22-2z" fill="#a9dbf5" stroke="#5aa5d0" /><path d="M20 14h5v4h-5z" fill="#d84a2a" />
        <path d="M1 28c9 5 16-2 26 2l6 3c-10 1-24 4-32-5z" fill="#f0a83a" />
      </Task>
      <Task name="Explorer" open className="ml-1 w-[55px]">
        <path d="M2 6h12l3 3h16v22H2z" fill="#f5de87" stroke="#d1aa4a" /><path d="M5 3h5v6H5z" fill="#4cb84c" /><path d="M14 3h5v6h-5z" fill="#e86a4a" /><path d="M23 5h7v5h-7z" fill="#5a9fd8" />
        <path d="M2 13h32v18H2z" fill="#fbeeb0" /><path d="M7 34v-8c0-4 4-5 11-5s11 1 11 5v8h-5v-6H12v6z" fill="#7cc4ec" stroke="#4a94c4" />
      </Task>
      <Task name="Media player" className="w-[87px]">
        <path d="M7 5l22 1 4 4v21l-22 1-4-4z" fill="#7fbde6" /><path d="M7 5l21 1v22H8z" fill="#a5d4f2" />
        <circle cx="17" cy="18" r="10" fill="#f0691c" stroke="#fff" /><path d="M14 12l9 6-9 6z" fill="#fff" />
      </Task>
      <Task name="Grid" open className="-ml-1 w-[55px]">
        <path d="M0 0h36v36H0z" fill="#1c3f94" /><path d="M4 4h28v28H4z" fill="#fff" />
        <path d="M7 7h4v4H7zM16 7h4v4h-4zM11 11h4v4h-4zM20 11h4v4h-4zM25 16h4v4h-4zM7 24h4v4H7zM16 25h4v4h-4zM25 25h4v4h-4zM11 20h4v4h-4zM20 20h4v4h-4z" fill="#1c3f94" />
        <path d="M25 7h4v4h-4zM7 16h4v4H7zM16 16h4v4h-4zM11 15h4v4h-4zM20 16h4v4h-4z" fill="#f0a028" />
      </Task>
      <Task name="Extreme Charts" open className="ml-[13px] w-[65px] to-[#e9f0f8]">
        <path d="M0 0h36v36H0z" fill="#f0b42c" /><path d="M5 0h31v36c-8-16-18-22-31-36z" fill="#f4e26a" />
        <path d="M4 3v28h29M3 28l8-6 4 3 6-8 4 4L34 8" stroke="#7a5220" strokeWidth="2" />
      </Task>
      <Task name="Word" open className="ml-1 w-[65px]">
        <path d="M2 7l7-5v30l-7-3z" fill="#2f56b0" /><path d="M9 3l24 2-2 28-22-2z" fill="#f2f5fb" stroke="#8da3cc" />
        <path d="M9 7l19 1v16l-19 1z" fill="#3a64c0" /><path d="M12 11l4 9 3-7 2 7 5-9" stroke="#fff" strokeWidth="2.5" />
      </Task>
      <Task name="Notes" className="w-[72px]">
        <path d="M6 3h24v30H6z" fill="#a7d8f0" stroke="#74b4da" /><path d="M8 5h18v4H8z" fill="#f4c890" /><path d="M9 12h10M9 18h8M9 24h8M17 18v12M22 8v6M19 11h6" stroke="#5a9cc8" strokeWidth="1.5" /><path d="M22 24h6v6h-6z" fill="#e8b040" />
      </Task>
      <Task name="Sync" className="w-[68px]">
        <path d="M21 4c0-3 13-3 13 0v14c0 3-13 3-13 0z" fill="#c8b820" stroke="#5c5408" /><path d="M24 4v15" stroke="#f6ee80" strokeWidth="3" />
        <path d="M2 17c0-3 13-3 13 0v15c0 3-13 3-13 0z" fill="#999" stroke="#444" /><path d="M5 18v15" stroke="#ddd" strokeWidth="3" />
        <path d="M3 13c1-6 5-8 9-8V1l6 6-6 5V9c-3 0-6 1-9 4zM34 24c-2 4-5 5-8 5v-3l-6 5 6 5v-3c4 0 7-4 8-9z" fill="#1414f0" />
      </Task>
      <Task name="VZ" className="w-[68px]">
        <path d="M1 1h34v34H1z" fill="#dadada" stroke="#e05050" strokeWidth="2" /><path d="M18 3l7 7H11z" fill="#e81818" />
        <path d="M12 13h12v8H12z" fill="#777" stroke="#333" /><path d="M9 23h9l-4 8z" fill="#111" /><path d="M18 24h6l-5 7h7" stroke="#e81818" strokeWidth="2.5" />
      </Task>
      <Task name="Firefox" hot className="ml-[2px] w-[57px]">
        <circle cx="18" cy="18" r="17" fill="#e2641c" /><circle cx="19" cy="14" r="12" fill="#2a72b8" /><path d="M14 4c5-3 12-1 14 3l-8 4z" fill="#7cc8f0" />
        <path d="M2 13C4 6 8 4 8 4l1 5c3-1 6 0 7 2-2 2-4 3-4 5 0 5 8 6 12 3-1 6-8 9-14 6C4 22 2 18 2 13z" fill="#c8401a" /><path d="M30 7c5 6 5 15 0 21-6 6-15 7-22 2 9 2 17 0 20-7 2-5 3-10 2-16z" fill="#f8b830" />
      </Task>
      <Task name="VP" className="w-[81px]">
        <circle cx="19" cy="18" r="15" fill="#c3d2e6" /><path d="M9 10c4-10 18-8 20-1l-9 4z" fill="#5c84bc" />
        <text x="4" y="26" fontSize="20" fontWeight="bold" fill="#222">V</text><text x="18" y="26" fontSize="20" fill="#5c84bc">P</text>
      </Task>
      <Task name="Reader" open className="w-[56px]">
        <path d="M2 2h32v31H2z" fill="#b40c10" /><path d="M2 2h32v13L2 20z" fill="#d02a2a" /><path d="M7 28c5-4 11-12 10-22-1 8 6 15 13 16-7-3-16 0-23 6z" stroke="#fff" strokeWidth="2" />
      </Task>
      <Task name="Office" open className="ml-[13px] w-[65px]">
        <path d="M1 2c6-3 10 2 17 1v15c-7 1-11-2-17 0z" fill="#f08a28" /><path d="M17 3c7 3 11-1 18 0v15c-7-1-11 2-18 0z" fill="#1c7ab8" />
        <path d="M1 18c6-2 10 1 17 0v16c-7 1-11-2-17 0z" fill="#4ca444" /><path d="M16 16c8 4 12 0 19 2v16c-7 3-11-1-18 0z" fill="#d03a28" />
      </Task>
      <Task name="MarketMaker" hot className="ml-[5px] w-[64px]">
        <path d="M1 1h34v34H1z" fill="#7a1f24" stroke="#777" strokeWidth="2" /><path d="M2 2h32v7H2z" fill="#a8a0a0" /><path d="M7 28V11l11 9 11-9v17" stroke="#fff" strokeWidth="5" />
        <path d="M21 22h6v5h-6zM28 28h5v6h-5z" fill="#2f86e0" /><path d="M28 22h5v5h-5zM21 28h6v6h-6z" fill="#f4d030" />
      </Task>

      <div className="ml-auto flex h-full items-center bg-linear-to-r from-[#9fb8d8] via-[#768ba6] via-15% to-[#768ba6] pl-8 text-white">
        <div className="mr-[6px] flex items-center gap-[6px]">
          <span className="mr-2 size-1 bg-white" />
          <Svg><path d="M4 3v14M5 4h6v6H5zM11 6h6v6h-6z" fill="#f4f4f4" stroke="#f4f4f4" /></Svg>
          <Svg><path d="M3 6h6v12H3zM10 3h3v4h4v5l-3 2v4h-3z" fill="#ececec" stroke="#999" /></Svg>
          <Svg><path d="M2 7h4l5-4v14l-5-4H2z" fill="#f4f4f4" /><path d="M13 6c3 2 3 6 0 8M15 3c4 4 4 10 0 14" stroke="#d0d8e0" strokeWidth="1.5" /></Svg>
          <Svg><path d="M1 17h17V3z" fill="#dcdcdc" /></Svg>
        </div>
        <div className="flex w-20 flex-col items-center font-['Open_Sans','Noto_Sans',sans-serif] text-[12px] leading-[18px]">
          <time>8:42 AM</time>
          <time>3/15/2011</time>
        </div>
        <button aria-label="Show desktop" className="h-full w-[15px] border-l border-[#4c5d75] bg-linear-to-b from-[#8094ad] to-[#566a86]" />
      </div>
    </footer>
  )
}

export default function App() {
  return (
    <div className="h-screen bg-white pr-3 pb-[11px] font-['Liberation_Sans',Arial,sans-serif]">
      <div className="flex h-full flex-col bg-[#dcdcdc] shadow-[5px_5px_6px_1px_#444]">
        <TitleBar />
        <MenuBar />
        <Toolbar />
        <div className="flex min-h-0 grow pt-px">
          <SymbolsPanel />
          <div className="w-1 shrink-0 bg-[#ececec]" />
          <ChartWindow />
          <DrawingBar />
        </div>
        <Taskbar />
      </div>
    </div>
  )
}
